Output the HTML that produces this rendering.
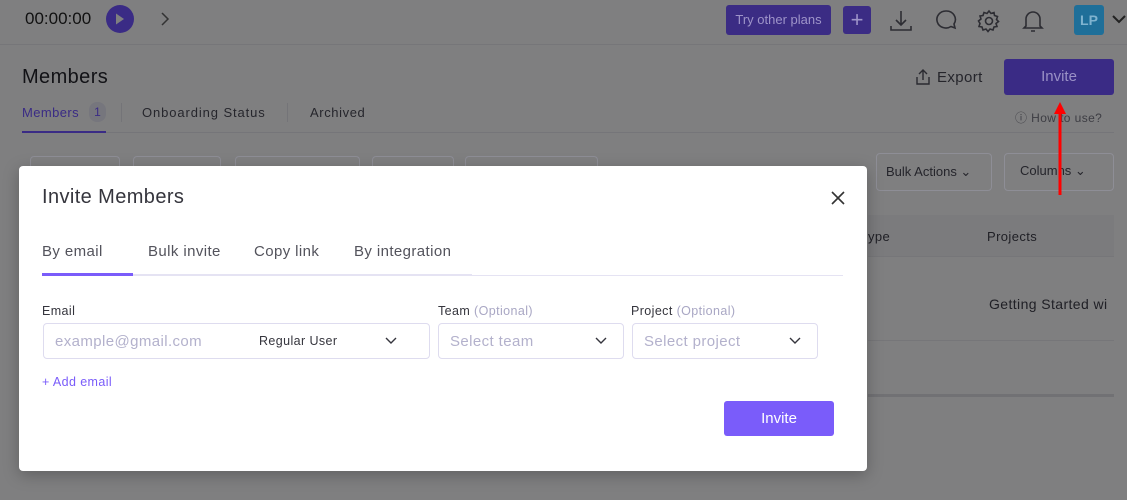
<!DOCTYPE html>
<html><head><meta charset="utf-8"><style>
*{box-sizing:border-box;margin:0;padding:0}
body{width:1127px;height:500px;overflow:hidden;background:#7f7f80;font-family:"Liberation Sans",sans-serif;position:relative;color:#1d1d24}
.a{position:absolute}
.t{white-space:nowrap;letter-spacing:.4px}
.ob{border:1px solid #8e8e96;border-radius:4px}
</style></head><body>
<div class="a" style="left:0;top:44px;width:1127px;height:1px;background:#767679"></div>
<div class="a t" style="left:25px;top:9px;font-size:17px;color:#111;letter-spacing:0">00:00:00</div>
<div class="a" style="left:106px;top:5px;width:28px;height:28px;border-radius:50%;background:#3a2b85"></div>
<svg class="a" style="left:114px;top:12px" width="12" height="14"><path d="M2 1.5 L10 7 L2 12.5Z" fill="#7f7f80"/></svg>
<svg class="a" style="left:159px;top:12px" width="12" height="14"><path d="M3 1 L9 7 L3 13" stroke="#333" stroke-width="1.5" fill="none"/></svg>
<div class="a t" style="left:726px;top:5px;width:105px;height:30px;background:#3b2c84;border-radius:3px;color:#9e94c9;font-size:13px;line-height:30px;text-align:center;letter-spacing:0">Try other plans</div>
<div class="a" style="left:843px;top:6px;width:28px;height:28px;background:#3b2c84;border-radius:3px;color:#9e94c9;font-size:22px;line-height:27px;text-align:center">+</div>
<svg class="a" style="left:888px;top:8px" width="26" height="26" fill="none" stroke="#2d2d33" stroke-width="1.6"><path d="M13 3v14M8 12l5 5 5-5M3 18v4h20v-4"/></svg>
<svg class="a" style="left:933px;top:8px" width="26" height="26" fill="none" stroke="#2d2d33" stroke-width="1.6"><path d="M13 3a9 8.5 0 1 0 5 15.5l4 1.5-1-4A9 8.5 0 0 0 13 3z"/></svg>
<svg class="a" style="left:976px;top:8px" width="26" height="26" fill="none" stroke="#2d2d33" stroke-width="1.6"><circle cx="13" cy="13" r="3.5"/><path d="M13 3l2 2.5 3-1 .5 3 3 1-1 3 2 2-2.5 2 1 3-3 .5-1 3-3-1-2 2.5-2-2.5-3 1-1-3-3-.5 1-3L2.5 13 5 11l-1-3 3-.5 1-3 3 1z"/></svg>
<svg class="a" style="left:1020px;top:7px" width="26" height="28" fill="none" stroke="#2d2d33" stroke-width="1.6"><path d="M6 19V12a7 7 0 0 1 14 0v7l2 2H4zM11 24h4"/></svg>
<div class="a" style="left:1074px;top:5px;width:30px;height:30px;background:#1f6f99;border-radius:3px;color:#7fb3cf;font-size:14px;line-height:30px;text-align:center;font-weight:bold">LP</div>
<svg class="a" style="left:1112px;top:13px" width="15" height="12"><path d="M1 3l6 6 6-6" stroke="#222" stroke-width="2" fill="none"/></svg>
<div class="a t" style="left:22px;top:66px;font-size:20px;color:#121216">Members</div>
<div class="a t" style="left:22px;top:105px;font-size:13px;color:#3a2b85">Members</div>
<div class="a" style="left:89px;top:102px;width:17px;height:20px;background:#76767d;border-radius:8px;color:#3a2b85;font-size:12px;text-align:center;line-height:20px">1</div>
<div class="a" style="left:121px;top:103px;width:1px;height:19px;background:#747478"></div>
<div class="a t" style="left:142px;top:105px;font-size:13px;color:#26262c;letter-spacing:.9px">Onboarding Status</div>
<div class="a" style="left:287px;top:103px;width:1px;height:19px;background:#747478"></div>
<div class="a t" style="left:310px;top:105px;font-size:13px;color:#26262c;letter-spacing:.6px">Archived</div>
<div class="a" style="left:22px;top:132px;width:1092px;height:1px;background:#757579"></div>
<div class="a" style="left:22px;top:131px;width:84px;height:2px;background:#3a2b85"></div>
<svg class="a" style="left:914px;top:68px" width="18" height="18" fill="none" stroke="#2a2a30" stroke-width="1.4"><path d="M9 2v10M5 6l4-4 4 4M3 9v7h12V9"/></svg>
<div class="a t" style="left:937px;top:69px;font-size:15px;color:#25252b">Export</div>
<div class="a" style="left:1004px;top:59px;width:110px;height:36px;background:#3a2b85;border-radius:3px;color:#9a91c6;font-size:15px;text-align:center;line-height:36px">Invite</div>
<div class="a t" style="left:1015px;top:109px;font-size:12px;color:#3d3d43">ⓘ How to use?</div>
<div class="a ob" style="left:876px;top:153px;width:116px;height:38px;font-size:13px;color:#25252b;line-height:36px;padding-left:9px">Bulk Actions ⌄</div>
<div class="a ob" style="left:1004px;top:153px;width:110px;height:38px;font-size:13px;color:#25252b;line-height:34px;padding-left:15px">Columns ⌄</div>
<div class="a" style="left:868px;top:215px;width:246px;height:42px;background:#7b7b7d;border-bottom:1px solid #767679"></div>
<div class="a t" style="left:868px;top:229px;font-size:13px;color:#1f1f25">ype</div>
<div class="a t" style="left:987px;top:229px;font-size:13px;color:#1f1f25">Projects</div>
<div class="a t" style="left:989px;top:296px;font-size:14px;color:#1f1f25">Getting Started wi</div>
<div class="a" style="left:868px;top:340px;width:246px;height:1px;background:#767679"></div>
<div class="a" style="left:868px;top:394px;width:246px;height:3px;background:#717174"></div>
<div class="a ob" style="left:30px;top:156px;width:90px;height:14px;border-bottom:none"></div>
<div class="a ob" style="left:133px;top:156px;width:88px;height:14px;border-bottom:none"></div>
<div class="a ob" style="left:235px;top:156px;width:125px;height:14px;border-bottom:none"></div>
<div class="a ob" style="left:372px;top:156px;width:82px;height:14px;border-bottom:none"></div>
<div class="a ob" style="left:465px;top:156px;width:133px;height:14px;border-bottom:none"></div>
<svg class="a" style="left:1052px;top:100px" width="16" height="96"><path d="M8 95V10" stroke="#f00" stroke-width="3"/><path d="M2 14L8 2l6 12z" fill="#f00"/></svg>
<div class="a" style="left:19px;top:166px;width:848px;height:305px;background:#fff;border-radius:4px;box-shadow:0 4px 16px rgba(0,0,0,.25)">
<div class="a t" style="left:23px;top:20px;font-size:20px;color:#35353d">Invite Members</div>
<svg class="a" style="left:812px;top:25px" width="14" height="14"><path d="M1 1l12 12M13 1L1 13" stroke="#333" stroke-width="1.6"/></svg>
<div class="a t" style="left:23px;top:77px;font-size:15px;color:#53535c">By email</div>
<div class="a t" style="left:129px;top:77px;font-size:15px;color:#53535c">Bulk invite</div>
<div class="a t" style="left:235px;top:77px;font-size:15px;color:#53535c">Copy link</div>
<div class="a t" style="left:335px;top:77px;font-size:15px;color:#53535c">By integration</div>
<div class="a" style="left:23px;top:109px;width:801px;height:1px;background:#e5e3f3"></div>
<div class="a" style="left:114px;top:108px;width:339px;height:2px;background:#e5e3f3"></div>
<div class="a" style="left:23px;top:107px;width:91px;height:3px;background:#7a5cfa"></div>
<div class="a t" style="left:23px;top:138px;font-size:12.5px;color:#35353d">Email</div>
<div class="a t" style="left:419px;top:138px;font-size:12.5px;color:#35353d">Team <span style="color:#a9a7c4">(Optional)</span></div>
<div class="a t" style="left:612px;top:138px;font-size:12.5px;color:#35353d">Project <span style="color:#a9a7c4">(Optional)</span></div>
<div class="a" style="left:24px;top:157px;width:387px;height:36px;border:1px solid #dedcef;border-radius:4px"></div>
<div class="a t" style="left:36px;top:167px;font-size:15px;color:#b3b1cc">example@gmail.com</div>
<div class="a t" style="left:240px;top:168px;font-size:12.5px;color:#35353d">Regular User</div>
<svg class="a" style="left:366px;top:171px" width="12" height="8"><path d="M1 1l5 5 5-5" stroke="#35353d" stroke-width="1.4" fill="none"/></svg>
<div class="a" style="left:419px;top:157px;width:186px;height:36px;border:1px solid #dedcef;border-radius:4px"></div>
<div class="a t" style="left:431px;top:167px;font-size:15px;color:#b3b1cc">Select team</div>
<svg class="a" style="left:576px;top:171px" width="12" height="8"><path d="M1 1l5 5 5-5" stroke="#35353d" stroke-width="1.4" fill="none"/></svg>
<div class="a" style="left:613px;top:157px;width:186px;height:36px;border:1px solid #dedcef;border-radius:4px"></div>
<div class="a t" style="left:625px;top:167px;font-size:15px;color:#b3b1cc">Select project</div>
<svg class="a" style="left:770px;top:171px" width="12" height="8"><path d="M1 1l5 5 5-5" stroke="#35353d" stroke-width="1.4" fill="none"/></svg>
<div class="a t" style="left:23px;top:209px;font-size:12.5px;color:#7a5cfa">+ Add email</div>
<div class="a" style="left:705px;top:235px;width:110px;height:35px;background:#7a5cfa;border-radius:3px;color:#fff;font-size:15px;text-align:center;line-height:35px">Invite</div>
</div>
</body></html>
